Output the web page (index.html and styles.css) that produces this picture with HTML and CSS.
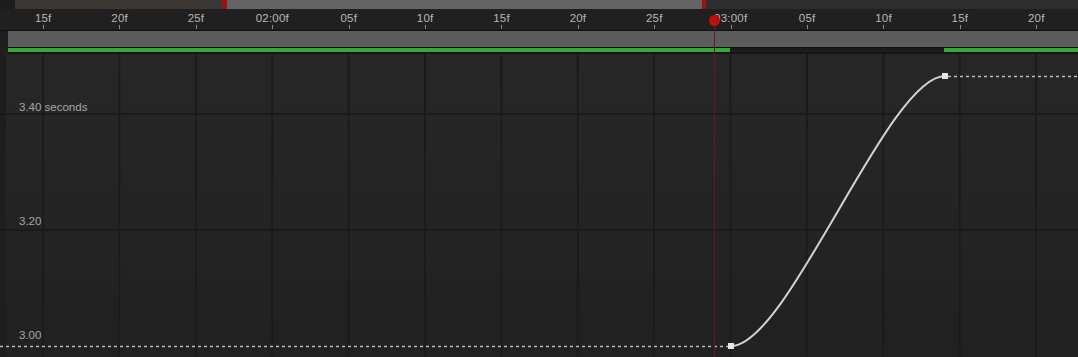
FILE: index.html
```html
<!DOCTYPE html>
<html>
<head>
    <meta charset="utf-8" />
    <title>Graph Editor</title>
    <link rel="stylesheet" href="styles.css">
</head>
<body>
    <div class="timeline">
        <div class="topbar">
            <div class="topbar-edge"></div>
            <div class="topbar-left"></div>
            <div class="work-area"></div>
            <div class="topbar-right"></div>
        </div>

        <div class="ruler">
            <div class="tick">15f</div>
            <div class="tick">20f</div>
            <div class="tick">25f</div>
            <div class="tick">02:00f</div>
            <div class="tick">05f</div>
            <div class="tick">10f</div>
            <div class="tick">15f</div>
            <div class="tick">20f</div>
            <div class="tick">25f</div>
            <div class="tick">03:00f</div>
            <div class="tick">05f</div>
            <div class="tick">10f</div>
            <div class="tick">15f</div>
            <div class="tick">20f</div>
        </div>

        <div class="workbar"></div>

        <div class="keybar">
            <div class="key-green first"></div>
            <div class="key-gap"></div>
            <div class="key-green last"></div>
        </div>

        <div class="graph">
            <div class="graph-row row-top">
                <span class="value">3.40 seconds</span>
            </div>
            <div class="graph-row row-mid">
                <span class="value">3.20</span>
            </div>
            <div class="graph-row row-low">
                <span class="value">3.00</span>
            </div>

            <svg class="curve" width="1078" height="304" viewBox="0 0 1078 304">
                <line x1="0" y1="292.5" x2="728" y2="292.5" class="dotted" />
                <line x1="948" y1="22.5" x2="1078" y2="22.5" class="dotted" />
                <path d="M731 292 C788 292, 888 22, 945 22" class="speed" />
                <rect x="728" y="289" width="6" height="6" class="key" />
                <rect x="942" y="19" width="6" height="6" class="key" />
            </svg>
        </div>

        <!-- current time indicator -->
        <div class="playhead">
            <div class="playhead-head"></div>
        </div>
    </div>
</body>
</html>
```

FILE: styles.css
```css
html, body {
    margin: 0;
    padding: 0;
    background-color: #1f1f1f;
}

body {
    font-family: "Liberation Sans", "DejaVu Sans", sans-serif;
    overflow: hidden;
}

.timeline {
    position: relative;
    width: 1078px;
    height: 357px;
}

/* work area strip */
.topbar {
    display: flex;
    height: 9px;
    background-color: #2e2e2e;
}

.topbar-edge {
    width: 15px;
    background-color: #1c1c1c;
}

.topbar-left {
    width: 207px;
    background-color: #3a3735;
    border-right: 5px solid #a01010;
}

.work-area {
    width: 475px;
    background-color: #646464;
    border-right: 4px solid #a01010;
}

.topbar-right {
    flex: 1;
    background-color: #2d2d2d;
}

/* frame ruler */
.ruler {
    display: flex;
    height: 21px;
    padding-left: 5px;
    background-color: #202020;
    border-bottom: 1px solid #0f0f0f;
}

.tick {
    position: relative;
    flex: 0 0 76.4px;
    text-align: center;
    font-size: 11.5px;
    line-height: 13px;
    padding-top: 3px;
    color: #b8b8b8;
    letter-spacing: 0.2px;
}

.tick::after {
    content: "";
    position: absolute;
    left: 38px;
    bottom: 1px;
    width: 1px;
    height: 4px;
    background-color: #8c8c8c;
}

.workbar {
    height: 16px;
    margin-left: 8px;
    background-color: #5c5c5c;
    border-bottom: 1px solid #111;
}

.keybar {
    display: flex;
    height: 4px;
    margin-left: 8px;
    border-bottom: 2px solid #161616;
}

.key-green {
    background-color: #35a835;
}

.key-green.first {
    width: 722px;
}

.key-gap {
    width: 214px;
    background-color: #1c1c1c;
}

.key-green.last {
    flex: 1;
}

/* value graph */
.graph {
    position: relative;
    height: 304px;
    background-color: #252525;
    background-image:
        linear-gradient(to right, #1b1b1b 0, #1b1b1b 2px, transparent 2px),
        linear-gradient(to bottom, #272727, #212121);
    background-size: 76.4px 100%, 100% 100%;
    background-position: 42px 0, 0 0;
    box-shadow: inset 6px 0 0 #1e1e1e;
}

.graph-row {
    display: flex;
    align-items: flex-end;
    box-sizing: border-box;
    padding-left: 19px;
    border-bottom: 2px solid #1a1a1a;
}

.row-top {
    height: 61px;
    padding-bottom: 0;
}

.row-mid {
    height: 116px;
    padding-bottom: 2px;
}

.row-low {
    height: 115px;
    padding-bottom: 5px;
    border-bottom: 0;
}

.value {
    font-size: 11.5px;
    line-height: 12px;
    color: #a6a6a6;
}

.curve {
    position: absolute;
    top: 0;
    left: 0;
}

.dotted {
    stroke: #bcbcbc;
    stroke-width: 1.5;
    stroke-dasharray: 3 3;
}

.speed {
    fill: none;
    stroke: #d2d2d2;
    stroke-width: 2;
}

.key {
    fill: #e6e6e6;
}

.playhead {
    position: absolute;
    left: 714px;
    top: 15px;
    bottom: 0;
    width: 1px;
    background-color: #6e1616;
}

.playhead-head {
    position: absolute;
    left: -5px;
    top: 0;
    width: 11px;
    height: 11px;
    border-radius: 50%;
    background-color: #c00d0d;
}
```
